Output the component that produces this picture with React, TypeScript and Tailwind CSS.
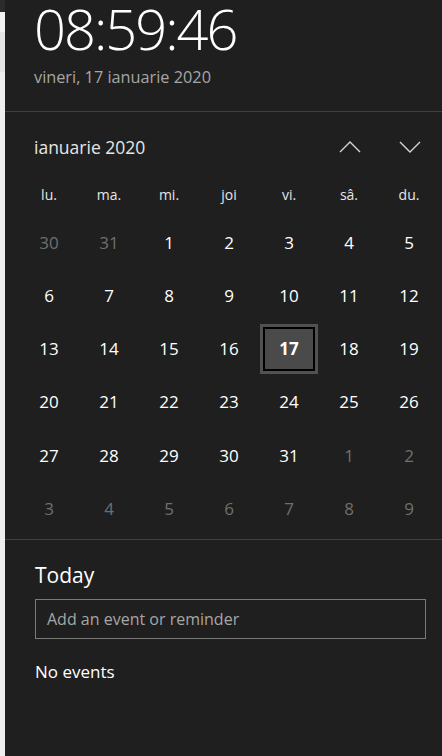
import React from 'react';

const weekDays = ['lu.', 'ma.', 'mi.', 'joi', 'vi.', 'sâ.', 'du.'];

// 6 weeks shown, Dec 30 2019 -> Feb 9 2020
const buildDays = () => {
  const days: { n: number; muted: boolean; today?: boolean }[] = [];
  days.push({ n: 30, muted: true }, { n: 31, muted: true });
  for (let i = 1; i <= 31; i++) days.push({ n: i, muted: false, today: i === 17 });
  for (let i = 1; days.length < 42; i++) days.push({ n: i, muted: true });
  return days;
};

const ChevronUp = () => (
  <svg width="22" height="12" viewBox="0 0 22 12" fill="none">
    <path d="M1 11 L11 1 L21 11" stroke="#d6d6d6" strokeWidth="1.4" />
  </svg>
);

const ChevronDown = () => (
  <svg width="22" height="12" viewBox="0 0 22 12" fill="none">
    <path d="M1 1 L11 11 L21 1" stroke="#d6d6d6" strokeWidth="1.4" />
  </svg>
);

export default function App() {
  const days = buildDays();

  return (
    <div
      className="w-[442px] h-[756px] flex overflow-hidden"
      style={{ fontFamily: '"Open Sans", "Noto Sans", sans-serif' }}
    >
      {/* sliver of the window behind */}
      <div className="w-[5px] flex flex-col bg-[#ececec]">
        <div className="h-[12px] bg-[#2b2b2b]" />
        <div className="h-[20px] bg-[#f2f2f2]" />
        <div className="h-[40px] bg-[#e4e4e4]" />
        <div className="flex-1 bg-[#eeeeee]" />
      </div>

      <div className="flex-1 bg-[#1f1f1f] text-white flex flex-col">
        {/* Clock */}
        <div className="h-[111px] pl-[29px] flex flex-col">
          <div className="text-[56px] leading-[56px] font-light tracking-[-2px]">08:59:46</div>
          <div className="text-[16.3px] leading-[20px] text-[#a6a6a6] mt-[11px]">vineri, 17 ianuarie 2020</div>
        </div>
        <div className="h-px bg-[#404040]" />

        {/* Month header */}
        <div className="h-[70px] flex items-center pl-[29px] pr-[21px]">
          <div className="text-[17.5px] text-[#e6e6e6] flex-1 mt-[1px]">ianuarie 2020</div>
          <div className="flex items-center gap-[38px]">
            <ChevronUp />
            <ChevronDown />
          </div>
        </div>

        {/* Calendar grid */}
        <div className="pl-[14px]">
          <div className="grid grid-cols-[repeat(7,60px)]">
            {weekDays.map((d) => (
              <div key={d} className="h-[24px] flex items-center justify-center text-[14px] text-[#e6e6e6]">
                {d}
              </div>
            ))}
          </div>
          <div className="grid grid-cols-[repeat(7,60px)] mt-[10px]">
            {days.map((d, i) => (
              <div key={i} className="h-[53.2px] flex items-center justify-center">
                {d.today ? (
                  <div className="w-[58px] h-[50px] border-[3px] border-[#515151] bg-black p-[2px]">
                    <div className="w-full h-full bg-[#4a4a4a] flex items-center justify-center text-[17px] font-bold">
                      {d.n}
                    </div>
                  </div>
                ) : (
                  <span className={`text-[17px] ${d.muted ? 'text-[#6f6f6f]' : 'text-white'}`}>{d.n}</span>
                )}
              </div>
            ))}
          </div>
        </div>

        <div className="h-px bg-[#404040] mt-[4px]" />

        {/* Agenda */}
        <div className="pl-[30px] pr-[16px]">
          <div className="text-[21px] mt-[20px] leading-[30px]">Today</div>
          <div className="mt-[9px] h-[40px] border border-[#7a7a7a] flex items-center pl-[11px] text-[16px] text-[#a6a6a6]">
            Add an event or reminder
          </div>
          <div className="mt-[20px] text-[17px]">No events</div>
        </div>
      </div>
    </div>
  );
}
